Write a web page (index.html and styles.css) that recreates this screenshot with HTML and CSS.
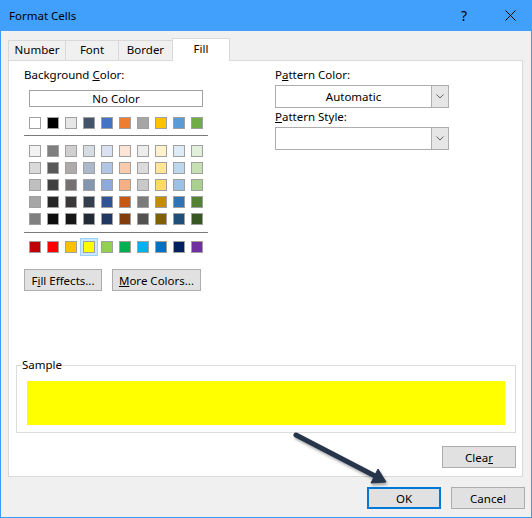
FILE: index.html
```html
<!DOCTYPE html>
<html lang="en">
<head>
    <meta charset="UTF-8">
    <title>Format Cells</title>
    <link rel="stylesheet" href="styles.css">
</head>
<body>
    <div class="window">
        <div class="titlebar">
            <span class="title">Format Cells</span>
            <div class="caption-btns">
                <span class="cap-btn help">?</span>
                <span class="cap-btn close">
                    <svg width="11" height="11" viewBox="0 0 11 11"><path d="M0.5 0.5 L10.5 10.5 M10.5 0.5 L0.5 10.5" stroke="#000" stroke-width="1" fill="none"/></svg>
                </span>
            </div>
        </div>

        <div class="frame">
            <div class="tabs">
                <div class="tab tab-number">Number</div>
                <div class="tab tab-font">Font</div>
                <div class="tab tab-border">Border</div>
                <div class="tab tab-fill active">Fill</div>
            </div>

            <div class="panel">
                <div class="top">
                    <div class="left-col">
                        <div class="label">Background <u>C</u>olor:</div>
                        <div class="no-color">No Color</div>
                        <div class="swatch-row" id="themeRow"></div>
                        <div class="sep"></div>
                        <div class="swatch-grid" id="tintGrid"></div>
                        <div class="sep sep-lower"></div>
                        <div class="swatch-row standard-row" id="standardRow"></div>
                        <div class="btn-row">
                            <button class="btn btn-fill">F<u>i</u>ll Effects...</button>
                            <button class="btn btn-more"><u>M</u>ore Colors...</button>
                        </div>
                    </div>
                    <div class="right-col">
                        <div class="label">P<u>a</u>ttern Color:</div>
                        <div class="combo">
                            <div class="combo-text">Automatic</div>
                            <div class="combo-arrow">
                                <svg width="8" height="5" viewBox="0 0 8 5"><path d="M0.5 0.5 L4 4 L7.5 0.5" stroke="#606060" stroke-width="1" fill="none"/></svg>
                            </div>
                        </div>
                        <div class="label label-style"><u>P</u>attern Style:</div>
                        <div class="combo">
                            <div class="combo-text"></div>
                            <div class="combo-arrow">
                                <svg width="8" height="5" viewBox="0 0 8 5"><path d="M0.5 0.5 L4 4 L7.5 0.5" stroke="#606060" stroke-width="1" fill="none"/></svg>
                            </div>
                        </div>
                    </div>
                </div>

                <fieldset class="sample">
                    <legend>Sample</legend>
                    <div class="sample-fill"></div>
                </fieldset>

                <div class="clear-row">
                    <button class="btn btn-clear">Clea<u>r</u></button>
                </div>
            </div>

            <div class="footer">
                <button class="btn btn-ok">OK</button>
                <button class="btn btn-cancel">Cancel</button>
            </div>
        </div>

        <!-- callout arrow pointing at OK -->
        <svg class="arrow" width="532" height="518" viewBox="0 0 532 518">
            <defs>
                <filter id="shadow" x="-20%" y="-20%" width="140%" height="140%">
                    <feDropShadow dx="1" dy="2" stdDeviation="1.5" flood-color="#000" flood-opacity="0.35"/>
                </filter>
            </defs>
            <g filter="url(#shadow)" fill="#25344a" stroke="#25344a">
                <line x1="296" y1="435" x2="376" y2="476.5" stroke-width="5" stroke-linecap="round"/>
                <polygon points="386,482 371,483 378,469" stroke-width="1" stroke-linejoin="round"/>
            </g>
        </svg>
    </div>

    <script>
        // Office theme colours, then the tints / shades of each column
        const theme = ['#FFFFFF', '#000000', '#E7E6E6', '#44546A', '#4472C4', '#ED7D31', '#A5A5A5', '#FFC000', '#5B9BD5', '#70AD47'];
        const tints = [
            ['#F2F2F2', '#7F7F7F', '#D0CECE', '#D6DCE4', '#D9E1F2', '#FCE4D6', '#EDEDED', '#FFF2CC', '#DDEBF7', '#E2EFDA'],
            ['#D9D9D9', '#595959', '#AEAAAA', '#ACB9CA', '#B4C6E7', '#F8CBAD', '#DBDBDB', '#FFE699', '#BDD7EE', '#C6E0B4'],
            ['#BFBFBF', '#404040', '#757171', '#8497B0', '#8EA9DB', '#F4B084', '#C9C9C9', '#FFD966', '#9BC2E6', '#A9D08E'],
            ['#A6A6A6', '#262626', '#3A3838', '#333F4F', '#305496', '#C65911', '#7B7B7B', '#BF8F00', '#2F75B5', '#548235'],
            ['#808080', '#0D0D0D', '#171616', '#222B35', '#203764', '#833C0C', '#525252', '#806000', '#1F4E78', '#375623']
        ];
        const standard = ['#C00000', '#FF0000', '#FFC000', '#FFFF00', '#92D050', '#00B050', '#00B0F0', '#0070C0', '#002060', '#7030A0'];

        function addSwatch(parent, color, selected) {
            let sw = document.createElement('div');
            sw.className = selected ? 'swatch selected' : 'swatch';
            sw.style.background = color;
            parent.appendChild(sw);
        }

        let themeRow = document.getElementById('themeRow');
        theme.forEach(c => addSwatch(themeRow, c));

        let tintGrid = document.getElementById('tintGrid');
        tints.forEach(row => row.forEach(c => addSwatch(tintGrid, c)));

        let standardRow = document.getElementById('standardRow');
        standard.forEach(c => addSwatch(standardRow, c, c === '#FFFF00'));
    </script>
</body>
</html>
```

FILE: styles.css
```css
* {
    margin: 0;
    padding: 0;
    box-sizing: border-box;
}
body {
    width: 532px;
    height: 518px;
    background: #f0f0f0;
    font-family: "Noto Sans", "Open Sans", sans-serif;
    font-size: 11.5px;
    color: #000;
    overflow: hidden;
}
.window {
    position: relative;
    width: 532px;
    height: 518px;
}

/* Title bar */
.titlebar {
    height: 31px;
    background: #41a0fb;
    display: flex;
    align-items: center;
    padding-left: 9px;
}
.title {
    font-size: 11.5px;
    line-height: 31px;
}
.caption-btns {
    margin-left: auto;
    display: flex;
    height: 31px;
}
.cap-btn {
    width: 46px;
    height: 31px;
    display: flex;
    justify-content: center;
    align-items: center;
}
.help {
    font-size: 14px;
    padding-right: 2px;
}
.close {
    width: 44px;
    padding-left: 1px;
}

/* Window body */
.frame {
    height: 487px;
    border: 1px solid #3c9af5;
    border-top: none;
    padding: 7px 8px 8px 7px;
}

.tabs {
    display: flex;
    align-items: flex-end;
    height: 22px;
}
.tab {
    height: 20px;
    border: 1px solid #d9d9d9;
    border-bottom: none;
    background: #f0f0f0;
    text-align: center;
    line-height: 17px;
    padding-bottom: 2px;
    margin-left: -1px;
}
.tab-number {
    width: 58px;
    margin-left: 0;
}
.tab-font {
    width: 54px;
}
.tab-border {
    width: 55px;
}
.tab-fill {
    width: 58px;
}
.tab.active {
    position: relative;
    z-index: 1;
    height: 23px;
    margin-bottom: -1px;
    background: #fff;
    padding-top: 1px;
    padding-bottom: 4px;
}

/* Fill page */
.panel {
    height: 417px;
    background: #fff;
    border: 1px solid #d9d9d9;
}
.top {
    display: flex;
    padding: 6px 0 0 15px;
}
.left-col {
    width: 184px;
}
.right-col {
    width: 174px;
    margin-left: 67px;
}
.label {
    line-height: 16px;
    white-space: nowrap;
}
.no-color {
    width: 174px;
    height: 17px;
    margin: 7px 0 0 5px;
    border: 1px solid #a0a0a0;
    text-align: center;
    line-height: 15px;
}

.swatch-row {
    display: flex;
    gap: 6px;
    margin: 10px 0 0 5px;
}
.swatch-grid {
    display: grid;
    grid-template-columns: repeat(10, 12px);
    column-gap: 6px;
    row-gap: 5px;
    margin: 9px 0 0 5px;
}
.standard-row {
    margin-top: 8px;
}
.swatch {
    width: 12px;
    height: 12px;
    border: 1px solid #a0a0a0;
}
.swatch.selected {
    box-shadow: 0 0 0 2px #cce8ff, 0 0 0 3px #99d1ff;
}
.sep {
    height: 1px;
    background: #7a7a7a;
    margin-top: 6px;
}
.sep-lower {
    margin-top: 7px;
}

.btn {
    height: 22px;
    background: #e1e1e1;
    border: 1px solid #adadad;
    font-family: inherit;
    font-size: 11.5px;
    color: #000;
    text-align: center;
}
.btn-row {
    display: flex;
    gap: 10px;
    margin-top: 16px;
}
.btn-fill {
    width: 78px;
}
.btn-more {
    width: 89px;
}

.combo {
    display: flex;
    height: 23px;
    margin-top: 2px;
    border: 1px solid #adadad;
    background: #fff;
}
.combo-text {
    flex: 1;
    text-align: center;
    line-height: 21px;
}
.combo-arrow {
    width: 17px;
    background: #e6e6e6;
    border-left: 1px solid #adadad;
    display: flex;
    justify-content: center;
    align-items: center;
}
.label-style {
    margin-top: 1px;
}

/* Sample */
.sample {
    margin: 66px 6px 0 7px;
    border: 1px solid #dcdcdc;
    padding: 8px 10px 7px 10px;
    min-width: 0;
}
.sample legend {
    line-height: 16px;
    padding: 0;
    margin-left: -5px;
}
.sample-fill {
    height: 44px;
    background: #ffff00;
}

.clear-row {
    display: flex;
    justify-content: flex-end;
    padding-right: 6px;
    margin-top: 13px;
}
.btn-clear {
    width: 74px;
}

/* Dialog buttons */
.footer {
    display: flex;
    justify-content: flex-end;
    gap: 10px;
    margin: 10px -2px 0 0;
}
.btn-ok,
.btn-cancel {
    width: 74px;
}
.btn-ok {
    border: 2px solid #0078d7;
}

.arrow {
    position: absolute;
    top: 0;
    left: 0;
    pointer-events: none;
}
```
